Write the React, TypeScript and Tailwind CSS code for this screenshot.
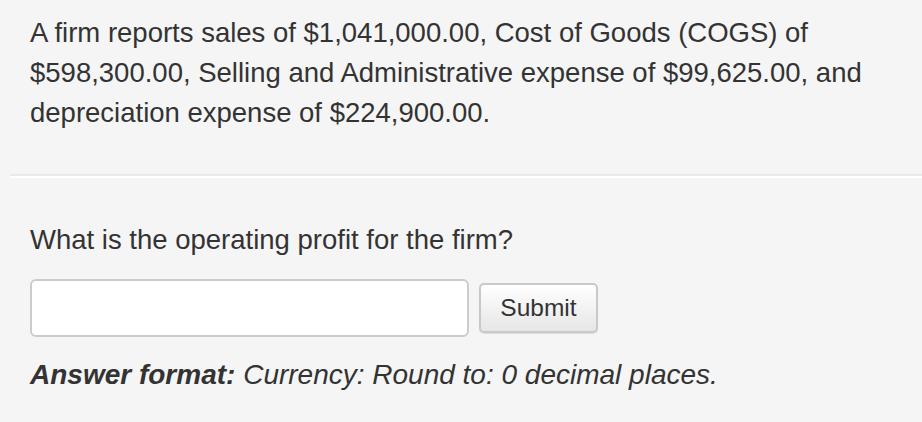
export default function App() {
  return (
    <div
      className="h-[422px] w-[922px] overflow-hidden bg-[#f5f5f5] text-[#333]"
      style={{ fontFamily: '"Liberation Sans", Arial, sans-serif' }}
    >
      <div className="pl-[30px] pt-[13px]">
        <p className="whitespace-nowrap text-[27.5px] leading-[40px]">
          A firm reports sales of $1,041,000.00, Cost of Goods (COGS) of
          <br />
          $598,300.00, Selling and Administrative expense of $99,625.00, and
          <br />
          depreciation expense of $224,900.00.
        </p>
      </div>

      <div className="ml-[10px] mt-[41px] border-t-2 border-b-2 border-t-[#eaeaea] border-b-white" />

      <div className="pl-[30px] pt-[42px]">
        <p className="text-[27.5px] leading-[40px]">
          What is the operating profit for the firm?
        </p>

        <div className="mt-[19px] flex items-center gap-[10px]">
          <input
            type="text"
            className="h-[58px] w-[439px] rounded-[6px] border-2 border-[#cccccc] bg-white px-3 text-[24px] outline-none"
          />
          <button
            type="button"
            className="h-[50px] w-[119px] rounded-[5px] border-2 border-[#c9c9c9] bg-gradient-to-b from-white to-[#e6e6e6] text-[24.5px] text-[#333] shadow-[0_1px_1px_rgba(0,0,0,0.1)]"
          >
            Submit
          </button>
        </div>

        <p className="mt-[18px] whitespace-nowrap text-[28px] italic leading-[40px]">
          <span className="font-bold">Answer format:</span> Currency: Round
          to: 0 decimal places.
        </p>
      </div>
    </div>
  );
}
